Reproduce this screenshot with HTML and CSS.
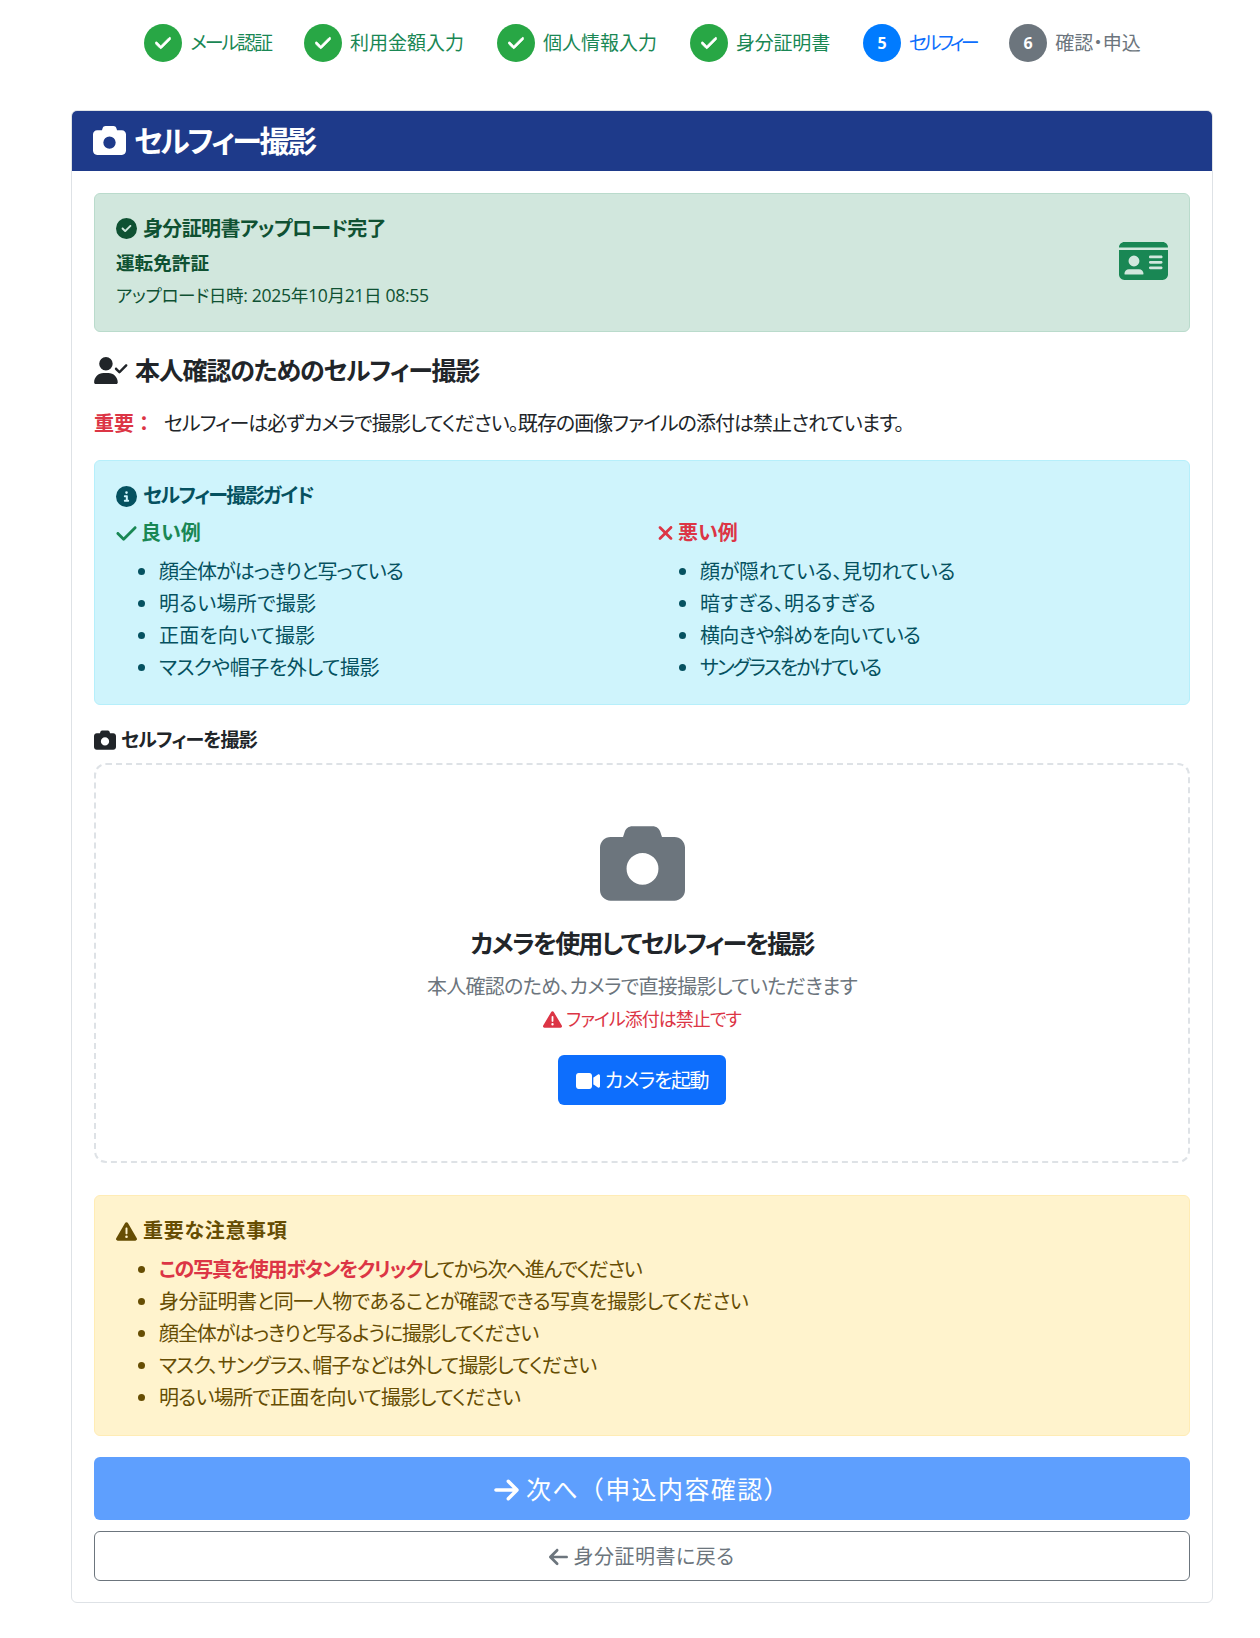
FILE: index.html
```html
<!DOCTYPE html>
<html lang="ja">
<head>
<meta charset="utf-8">
<title>セルフィー撮影</title>
<link rel="stylesheet" href="styles.css">
</head>
<body>
<svg class="sprite" xmlns="http://www.w3.org/2000/svg">
<symbol id="i-check-c" viewBox="0 0 512 512"><path d="M256 512A256 256 0 1 0 256 0a256 256 0 1 0 0 512zM369 209L241 337c-9.4 9.4-24.6 9.4-33.9 0l-64-64c-9.4-9.4-9.4-24.6 0-33.9s24.6-9.4 33.9 0l47 47L335 175c9.4-9.4 24.6-9.4 33.9 0s9.4 24.6 0 33.9z"/></symbol>
<symbol id="i-camera" viewBox="0 0 512 512"><path d="M149.1 64.8L138.7 96H64C28.7 96 0 124.7 0 160V416c0 35.3 28.7 64 64 64H448c35.3 0 64-28.7 64-64V160c0-35.3-28.7-64-64-64H373.3L362.9 64.8C356.4 45.2 338.1 32 317.4 32H194.6c-20.7 0-39 13.2-45.5 32.8zM256 192a96 96 0 1 1 0 192 96 96 0 1 1 0-192z"/></symbol>
<symbol id="i-user-check" viewBox="0 0 640 512"><path d="M96 128a128 128 0 1 1 256 0A128 128 0 1 1 96 128zM0 482.3C0 383.8 79.8 304 178.3 304h91.4C368.2 304 448 383.8 448 482.3c0 16.4-13.3 29.7-29.7 29.7H29.7C13.3 512 0 498.7 0 482.3zM625 177L497 305c-9.4 9.4-24.6 9.4-33.9 0l-64-64c-9.4-9.4-9.4-24.6 0-33.9s24.6-9.4 33.9 0l47 47L591 143c9.4-9.4 24.6-9.4 33.9 0s9.4 24.6 0 33.9z"/></symbol>
<symbol id="i-info" viewBox="0 0 512 512"><path d="M256 512A256 256 0 1 0 256 0a256 256 0 1 0 0 512zM216 336h24V272H216c-13.3 0-24-10.7-24-24s10.7-24 24-24h48c13.3 0 24 10.7 24 24v88h8c13.3 0 24 10.7 24 24s-10.7 24-24 24H216c-13.3 0-24-10.7-24-24s10.7-24 24-24zm40-208a32 32 0 1 1 0 64 32 32 0 1 1 0-64z"/></symbol>
<symbol id="i-check" viewBox="0 0 448 512"><path d="M438.6 105.4c12.5 12.5 12.5 32.8 0 45.3l-256 256c-12.5 12.5-32.8 12.5-45.3 0l-128-128c-12.5-12.5-12.5-32.8 0-45.3s32.8-12.5 45.3 0L160 338.7 393.4 105.4c12.5-12.5 32.8-12.5 45.3 0z"/></symbol>
<symbol id="i-x" viewBox="0 0 384 512"><path d="M342.6 150.6c12.5-12.5 12.5-32.8 0-45.3s-32.8-12.5-45.3 0L192 210.7 86.6 105.4c-12.5-12.5-32.8-12.5-45.3 0s-12.5 32.8 0 45.3L146.7 256 41.4 361.4c-12.5 12.5-12.5 32.8 0 45.3s32.8 12.5 45.3 0L192 301.3 297.4 406.6c12.5 12.5 32.8 12.5 45.3 0s12.5-32.8 0-45.3L237.3 256 342.6 150.6z"/></symbol>
<symbol id="i-warn" viewBox="0 0 512 512"><path d="M256 32c14.2 0 27.3 7.5 34.5 19.8l216 368c7.3 12.4 7.3 27.7 .2 40.1S486.3 480 472 480H40c-14.3 0-27.6-7.7-34.7-20.1s-7-27.8 .2-40.1l216-368C228.7 39.5 241.8 32 256 32zm0 128c-13.3 0-24 10.7-24 24V296c0 13.3 10.7 24 24 24s24-10.7 24-24V184c0-13.3-10.7-24-24-24zm32 224a32 32 0 1 0 -64 0 32 32 0 1 0 64 0z"/></symbol>
<symbol id="i-video" viewBox="0 0 576 512"><path d="M0 128C0 92.7 28.7 64 64 64H320c35.3 0 64 28.7 64 64V384c0 35.3-28.7 64-64 64H64c-35.3 0-64-28.7-64-64V128zM559.1 99.8c10.4 5.6 16.9 16.4 16.9 28.2V384c0 11.8-6.5 22.6-16.9 28.2s-23 5-32.9-1.6l-96-64L416 337.1V320 192 174.9l14.2-9.5 96-64c9.8-6.5 22.4-7.2 32.9-1.6z"/></symbol>
<symbol id="i-right" viewBox="0 0 448 512"><path d="M438.6 278.6c12.5-12.5 12.5-32.8 0-45.3l-160-160c-12.5-12.5-32.8-12.5-45.3 0s-12.5 32.8 0 45.3L338.8 224 32 224c-17.7 0-32 14.3-32 32s14.3 32 32 32l306.7 0L233.4 393.4c-12.5 12.5-12.5 32.8 0 45.3s32.8 12.5 45.3 0l160-160z"/></symbol>
<symbol id="i-left" viewBox="0 0 448 512"><path d="M9.4 233.4c-12.5 12.5-12.5 32.8 0 45.3l160 160c12.5 12.5 32.8 12.5 45.3 0s12.5-32.8 0-45.3L109.2 288 416 288c17.7 0 32-14.3 32-32s-14.3-32-32-32l-306.7 0L214.6 118.6c12.5-12.5 12.5-32.8 0-45.3s-32.8-12.5-45.3 0l-160 160z"/></symbol>
<symbol id="i-id" viewBox="0 0 576 512"><path d="M0 96l576 0c0-35.3-28.7-64-64-64H64C28.7 32 0 60.7 0 96zm0 32V416c0 35.3 28.7 64 64 64H512c35.3 0 64-28.7 64-64V128H0zM64 405.3c0-29.5 23.9-53.3 53.3-53.3H234.7c29.5 0 53.3 23.9 53.3 53.3c0 5.9-4.8 10.7-10.7 10.7H74.7c-5.9 0-10.7-4.8-10.7-10.7zM176 192a64 64 0 1 1 0 128 64 64 0 1 1 0-128zm176 16c0-8.8 7.2-16 16-16H496c8.8 0 16 7.2 16 16s-7.2 16-16 16H368c-8.8 0-16-7.2-16-16zm0 64c0-8.8 7.2-16 16-16H496c8.8 0 16 7.2 16 16s-7.2 16-16 16H368c-8.8 0-16-7.2-16-16zm0 64c0-8.8 7.2-16 16-16H496c8.8 0 16 7.2 16 16s-7.2 16-16 16H368c-8.8 0-16-7.2-16-16z"/></symbol>
</svg>

<main class="page">
  <ol class="steps">
    <li class="step done"><span class="dot"><svg class="dot-check" viewBox="0 0 448 512"><use href="#i-check"/></svg></span><span class="step-label t21">メール認証</span></li>
    <li class="step done"><span class="dot"><svg class="dot-check" viewBox="0 0 448 512"><use href="#i-check"/></svg></span><span class="step-label">利用金額入力</span></li>
    <li class="step done"><span class="dot"><svg class="dot-check" viewBox="0 0 448 512"><use href="#i-check"/></svg></span><span class="step-label">個人情報入力</span></li>
    <li class="step done"><span class="dot"><svg class="dot-check" viewBox="0 0 448 512"><use href="#i-check"/></svg></span><span class="step-label t02">身分証明書</span></li>
    <li class="step active"><span class="dot">5</span><span class="step-label t35">セルフィー</span></li>
    <li class="step pending"><span class="dot">6</span><span class="step-label">確認・申込</span></li>
  </ol>

  <section class="card">
    <header class="card-header">
      <svg class="ico-title"><use href="#i-camera"/></svg>
      <h1 class="card-title">セルフィー撮影</h1>
    </header>
    <div class="card-body">
      <div class="alert alert-success upload-done">
        <div class="upload-text">
          <h2 class="alert-title"><svg class="ico"><use href="#i-check-c"/></svg><span class="t06">身分証明書アップロード完了</span></h2>
          <p class="doc-type">運転免許証</p>
          <p class="doc-date">アップロード日時: 2025年10月21日 08:55</p>
        </div>
        <svg class="ico-id"><use href="#i-id"/></svg>
      </div>

      <h2 class="section-title"><svg class="ico-user"><use href="#i-user-check"/></svg><span class="t12">本人確認のためのセルフィー撮影</span></h2>
      <p class="notice"><strong class="notice-key">重要：</strong><span class="t10">セルフィーは必ずカメラで撮影してください。既存の画像ファイルの添付は禁止されています。</span></p>

      <div class="alert alert-info">
        <h3 class="alert-title"><svg class="ico"><use href="#i-info"/></svg><span class="t16">セルフィー撮影ガイド</span></h3>
        <div class="guide">
          <div>
            <h4 class="guide-title good"><svg class="ico-check"><use href="#i-check"/></svg>良い例</h4>
            <ul class="list list-guide">
              <li class="t10">顔全体がはっきりと写っている</li>
              <li class="p03">明るい場所で撮影</li>
              <li class="p01">正面を向いて撮影</li>
              <li class="t05">マスクや帽子を外して撮影</li>
            </ul>
          </div>
          <div>
            <h4 class="guide-title bad"><svg class="ico-x"><use href="#i-x"/></svg>悪い例</h4>
            <ul class="list list-guide">
              <li class="t03">顔が隠れている、見切れている</li>
              <li>暗すぎる、明るすぎる</li>
              <li class="t06">横向きや斜めを向いている</li>
              <li class="t20">サングラスをかけている</li>
            </ul>
          </div>
        </div>
      </div>

      <label class="field-label"><svg class="ico-label"><use href="#i-camera"/></svg><span class="t09">セルフィーを撮影</span></label>
      <div class="capture">
        <svg class="ico-capture"><use href="#i-camera"/></svg>
        <h3 class="capture-title t19">カメラを使用してセルフィーを撮影</h3>
        <p class="capture-sub t07">本人確認のため、カメラで直接撮影していただきます</p>
        <p class="capture-warn"><svg class="ico-warn"><use href="#i-warn"/></svg><span class="t10">ファイル添付は禁止です</span></p>
        <button class="btn btn-camera" type="button"><svg class="ico-video"><use href="#i-video"/></svg><span class="t14">カメラを起動</span></button>
      </div>

      <div class="alert alert-warning">
        <h3 class="alert-title"><svg class="ico"><use href="#i-warn"/></svg><span class="p07">重要な注意事項</span></h3>
        <ul class="list list-notes">
          <li><strong class="hot t12">この写真を使用ボタンをクリック</strong><span class="t15">してから次へ進んでください</span></li>
          <li class="t05">身分証明書と同一人物であることが確認できる写真を撮影してください</li>
          <li class="t11">顔全体がはっきりと写るように撮影してください</li>
          <li class="t08">マスク、サングラス、帽子などは外して撮影してください</li>
          <li class="t07">明るい場所で正面を向いて撮影してください</li>
        </ul>
      </div>

      <button class="btn btn-next" type="button"><svg class="ico-arrow"><use href="#i-right"/></svg>次へ（申込内容確認）</button>
      <button class="btn btn-back" type="button"><svg class="ico-arrow-s"><use href="#i-left"/></svg><span class="p05">身分証明書に戻る</span></button>
    </div>
  </section>
</main>
</body>
</html>
```

FILE: styles.css
```css
* { box-sizing: border-box; }

html, body { margin: 0; padding: 0; }

body {
  background: #fff;
  color: #212529;
  font-family: "Open Sans", "Noto Sans CJK JP", sans-serif;
  font-size: 20px;
  line-height: 1.5;
  font-feature-settings: "palt";
}

svg { fill: currentColor; flex: none; }

.sprite { position: absolute; width: 0; height: 0; overflow: hidden; }

h1, h2, h3, h4, p, ul, ol { margin: 0; padding: 0; }

.p07 { letter-spacing: 0.7px; }
.p05 { letter-spacing: 0.5px; }
.p03 { letter-spacing: 0.26px; }
.p01 { letter-spacing: 0.13px; }
.t02 { letter-spacing: -0.2px; }
.t03 { letter-spacing: -0.27px; }
.t05 { letter-spacing: -0.48px; }
.t06 { letter-spacing: -0.65px; }
.t07 { letter-spacing: -0.7px; }
.t08 { letter-spacing: -0.84px; }
.t09 { letter-spacing: -0.9px; }
.t10 { letter-spacing: -0.97px; }
.t11 { letter-spacing: -1.1px; }
.t12 { letter-spacing: -1.2px; }
.t14 { letter-spacing: -1.4px; }
.t15 { letter-spacing: -1.5px; }
.t16 { letter-spacing: -1.6px; }
.t19 { letter-spacing: -1.9px; }
.t20 { letter-spacing: -2px; }
.t21 { letter-spacing: -2.1px; }
.t35 { letter-spacing: -3.5px; }

.page { margin-left: 71px; width: 1142px; padding-bottom: 36px; }

/* Steps */
.steps {
  list-style: none;
  display: flex;
  justify-content: center;
  gap: 33px;
  padding-top: 24px;
  padding-left: 1px;
  height: 110px;
}

.step { display: flex; align-items: flex-start; gap: 8px; }

.dot {
  width: 38px;
  height: 38px;
  border-radius: 50%;
  color: #fff;
  display: flex;
  align-items: center;
  justify-content: center;
  font-size: 16px;
  font-weight: 700;
}

.dot-check { width: 16px; height: 18px; stroke: currentColor; stroke-width: 24; }

.step-label { font-size: 19px; line-height: 38px; }

.done .dot { background: #28a745; }
.done .step-label { color: #198754; }
.active .dot { background: #007bff; }
.active .step-label { color: #0d6efd; }
.pending .dot { background: #6c757d; }
.pending .step-label { color: #6c757d; }

/* Card */
.card {
  border: 1px solid #dee2e6;
  border-radius: 6px;
  height: 1493px;
  overflow: hidden;
}

.card-header {
  background: #1e3a8a;
  color: #fff;
  height: 61px;
  margin: -1px -1px 0;
  padding: 0 22px;
  display: flex;
  align-items: center;
  gap: 8px;
}

.ico-title { width: 33px; height: 33px; }

.card-title { font-size: 30px; font-weight: 700; line-height: 36px; letter-spacing: -2.3px; }

.card-body { padding: 22px 22px 21px; }

/* Alerts */
.alert {
  border: 1px solid transparent;
  border-radius: 6px;
  padding: 21px;
}

.alert-title {
  font-size: 20px;
  font-weight: 700;
  line-height: 28px;
  display: flex;
  align-items: center;
  gap: 6px;
}

.ico { width: 21px; height: 21px; }

.alert-success { background: #d1e7dd; border-color: #badbcc; color: #0f5132; }

.upload-done {
  height: 139px;
  display: flex;
  justify-content: space-between;
  align-items: center;
}

.upload-text { margin-bottom: 2px; }

.doc-type { font-size: 18.6px; font-weight: 700; line-height: 28px; margin-top: 6px; }
.doc-date { font-size: 17.6px; line-height: 28px; margin-top: 4px; letter-spacing: -0.34px; }

.ico-id { width: 49px; height: 44px; color: #198754; margin-bottom: 4px; }

.section-title {
  font-size: 25px;
  font-weight: 700;
  line-height: 32px;
  margin-top: 22px;
  display: flex;
  align-items: center;
  gap: 7px;
}

.ico-user { width: 34px; height: 27px; }

.notice { line-height: 30px; margin-top: 23px; }

.notice-key {
  color: #dc3545;
  font-weight: 700;
  margin-right: 10px;
  font-feature-settings: normal;
}

.alert-info {
  background: #cff4fc;
  border-color: #b6effb;
  color: #055160;
  margin-top: 21px;
  height: 245px;
}

.guide { display: grid; grid-template-columns: 1fr 1fr; column-gap: 30px; margin-top: 9px; }

.guide-title {
  font-size: 20px;
  font-weight: 700;
  line-height: 28px;
  display: flex;
  align-items: center;
  gap: 4px;
}

.good { color: #198754; }
.bad { color: #dc3545; }

.ico-check { width: 21px; height: 23px; }
.ico-x { width: 17px; height: 22px; }

.list { padding-left: 43px; }
.list li { line-height: 32px; }
.list-guide { margin-top: 9px; }
.list-notes { margin-top: 9px; }

/* Capture */
.field-label {
  display: flex;
  align-items: flex-start;
  gap: 5px;
  font-size: 19px;
  font-weight: 700;
  line-height: 28px;
  margin-top: 21px;
  height: 37px;
}

.ico-label { width: 22px; height: 22px; margin-top: 3px; }

.capture {
  border: 2px dashed #dee2e6;
  border-radius: 12px;
  height: 400px;
  padding-top: 56px;
  display: flex;
  flex-direction: column;
  align-items: center;
}

.ico-capture { width: 85px; height: 85px; color: #6c757d; }

.capture-title { font-size: 25px; font-weight: 700; line-height: 32px; margin-top: 21px; }

.capture-sub { color: #6c757d; line-height: 30px; margin-top: 13px; }

.capture-warn {
  color: #dc3545;
  font-size: 18px;
  line-height: 28px;
  margin-top: 3px;
  display: flex;
  align-items: center;
  gap: 4px;
}

.ico-warn { width: 19px; height: 19px; }

.btn {
  display: flex;
  align-items: center;
  justify-content: center;
  border: 1px solid transparent;
  border-radius: 6px;
  font: inherit;
  font-feature-settings: inherit;
  cursor: pointer;
}

.btn-camera {
  background: #0d6efd;
  color: #fff;
  width: 168px;
  height: 50px;
  margin-top: 22px;
  padding-top: 2px;
  gap: 5px;
}

.ico-video { width: 24px; height: 22px; }

/* Warning */
.alert-warning {
  background: #fff3cd;
  border-color: #ffecb5;
  color: #664d03;
  margin-top: 32px;
  height: 241px;
}

.hot { color: #dc3545; font-weight: 700; }

/* Actions */
.btn-next {
  width: 100%;
  height: 63px;
  margin-top: 21px;
  padding-top: 4px;
  background: #5e9ffe;
  color: #fff;
  font-size: 25px;
  font-feature-settings: normal;
  letter-spacing: 1.4px;
  gap: 7px;
}

.ico-arrow { width: 25px; height: 28px; }

.btn-back {
  width: 100%;
  height: 50px;
  margin-top: 11px;
  padding-top: 2px;
  background: #fff;
  border-color: #6c757d;
  color: #6c757d;
  gap: 5px;
}

.ico-arrow-s { width: 19px; height: 22px; }
```
